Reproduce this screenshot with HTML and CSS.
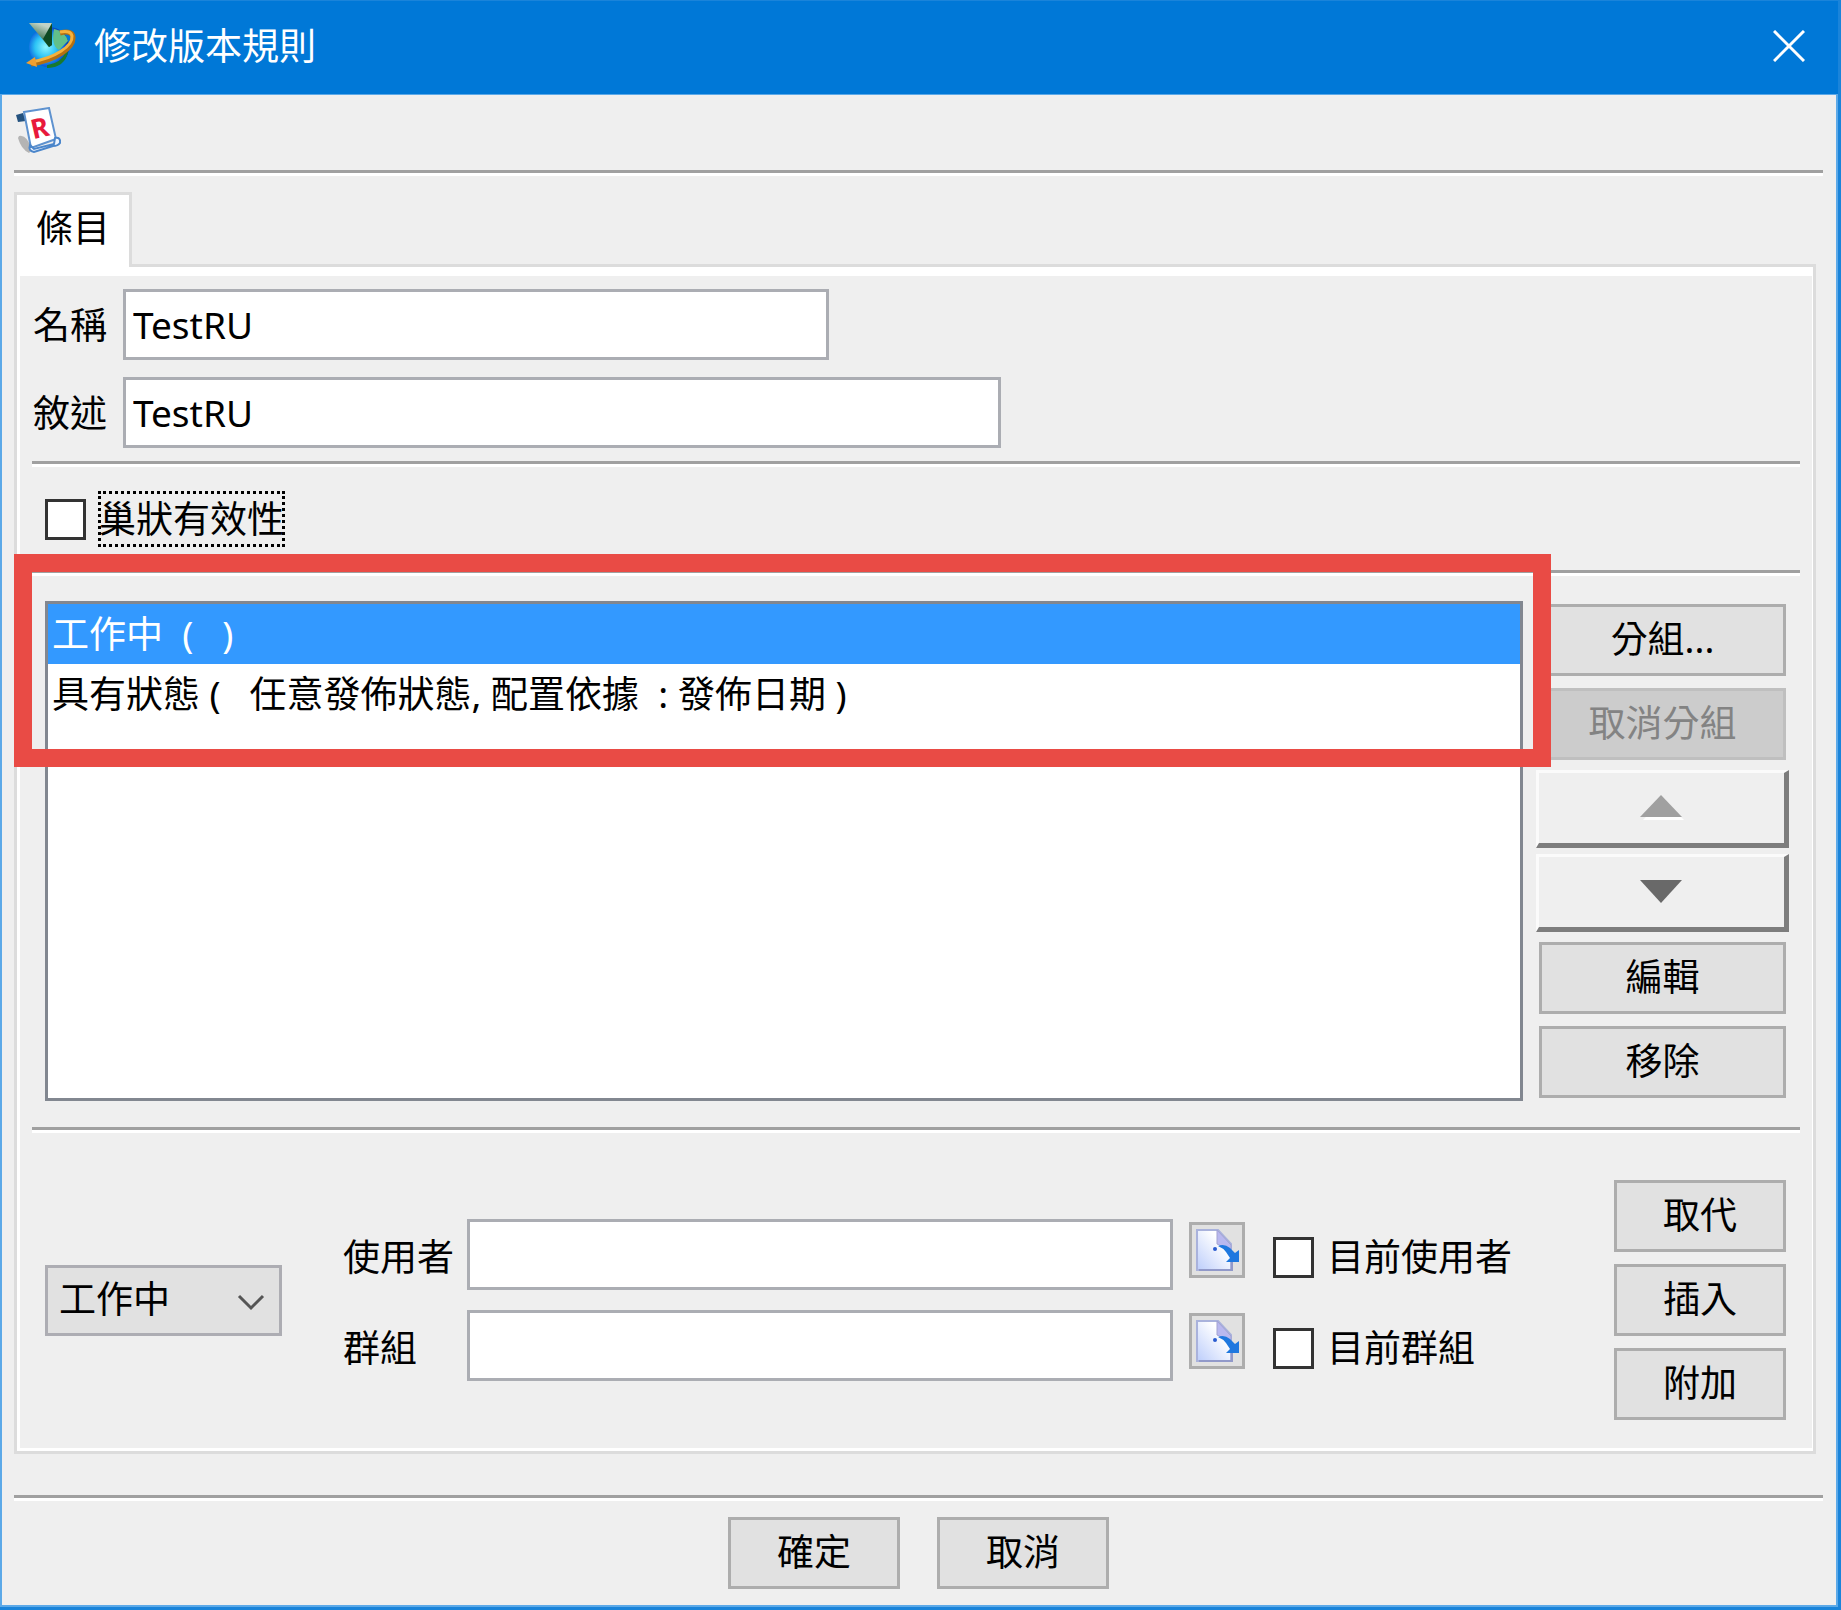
FILE: index.html
```html
<!DOCTYPE html>
<html lang="zh-Hant">
<head>
<meta charset="utf-8">
<meta name="viewport" content="width=device-width, initial-scale=1">
<title>修改版本規則</title>
<link rel="stylesheet" href="styles.css">
</head>
<body>
<svg class="defs" aria-hidden="true">
  <defs>
    <linearGradient id="page-fill" x1="1" y1="0" x2="0" y2="1">
      <stop offset="0.3" stop-color="#ffffff"/>
      <stop offset="1" stop-color="#bccdfb"/>
    </linearGradient>
    <radialGradient id="globe-fill" cx="0.42" cy="0.5" r="0.6">
      <stop offset="0" stop-color="#8ff6ff"/>
      <stop offset="0.45" stop-color="#2cc3f5"/>
      <stop offset="0.8" stop-color="#0a58dc"/>
      <stop offset="1" stop-color="#06308e"/>
    </radialGradient>
    <linearGradient id="arrow-fill" x1="0" y1="1" x2="0.4" y2="0">
      <stop offset="0" stop-color="#14562c"/>
      <stop offset="0.5" stop-color="#4d8060"/>
      <stop offset="1" stop-color="#c2d3c6"/>
    </linearGradient>
    <symbol id="picker" viewBox="0 0 50 50">
      <path d="M5 5h21l13 14v26H5z" fill="url(#page-fill)" stroke="#a9b2dc" stroke-width="2"/>
      <path d="M7 45h33V34" fill="none" stroke="#9199c9" stroke-width="2"/>
      <path d="M25 5l14 15v5L25 19z" fill="#b9b8ef" stroke="#a3a3d2"/>
      <circle cx="23" cy="24" r="2" fill="#2a5cd0"/>
      <path d="M26 21q6-3 12 2l5 5 4-3v12H34l4-4-4-6q-3-4-8-6z" fill="#1f78df"/>
    </symbol>
  </defs>
</svg>
<div class="window">
  <header class="titlebar">
    <svg class="app-icon" viewBox="0 0 50 50" aria-hidden="true">
      <circle cx="23" cy="26" r="20" fill="url(#globe-fill)"/>
      <path d="M28 8q11 2 14 12l-9 9q-8-4-5-21z" fill="#62c08a"/>
      <path d="M22 45q14-2 19-14-3 14-19 15z" fill="#17792f" stroke="#17792f" stroke-width="2"/>
      <path d="M34 12q12-3 13 4c1 11-17 23-42 27" fill="none" stroke="#b46f12" stroke-width="5"/>
      <path d="M34 11q11-2 12 4c1 10-17 22-41 26" fill="none" stroke="#f5b13c" stroke-width="3"/>
      <path d="M0 42l9-6 2 10z" fill="#f0a030"/>
      <path d="M3 2h23v22l-3 2z" fill="url(#arrow-fill)"/>
      <path d="M26 2v22l-3 2-6-8z" fill="#0d4a23"/>
    </svg>
    <h1 class="title">修改版本規則</h1>
    <button class="close" type="button" aria-label="關閉">
      <svg viewBox="0 0 32 32" aria-hidden="true"><path d="M1 1l30 30M31 1L1 31" fill="none" stroke="#fff" stroke-width="3"/></svg>
    </button>
  </header>

  <main class="content">
    <div class="toolbar">
      <button class="tool" type="button" aria-label="版本規則">
        <svg viewBox="0 0 48 48" aria-hidden="true">
          <path d="M5 29q8-2 13 14l-3 3Q7 42 4 31z" fill="#b4b4b4"/>
          <path d="M2 8l7-2 3 8-8 1z" fill="#24527f"/>
          <path d="M10 5l25-4 7 31-25 9z" fill="#fff" stroke="#5e92cf" stroke-width="2"/>
          <path d="M16 38l4 4 20-5 1-6q6-1 5 5-2 3-7 3l-19 6q-6-1-4-7z" fill="#eef5ff" stroke="#4b86cb" stroke-width="2"/>
          <text class="tool-letter" x="17" y="31" transform="rotate(-13 24 22)">R</text>
        </svg>
      </button>
    </div>
    <hr class="rule">

    <div class="tabs" role="tablist">
      <button class="tab" type="button" role="tab" aria-selected="true">條目</button>
    </div>
    <section class="panel" role="tabpanel">
      <div class="sheet">
        <div class="fields">
          <label for="name">名稱</label>
          <input class="box name" id="name" type="text" value="TestRU">
          <label for="desc">敘述</label>
          <input class="box desc" id="desc" type="text" value="TestRU">
        </div>
        <hr class="rule">
        <div class="option">
          <input class="check" id="nested" type="checkbox">
          <label class="focused" for="nested">巢狀有效性</label>
        </div>
        <hr class="rule">

        <div class="entries">
          <ul class="list" role="listbox" aria-label="條目">
            <li class="entry selected" role="option" aria-selected="true">工作中  (   )</li>
            <li class="entry" role="option" aria-selected="false">具有狀態 (   任意發佈狀態, 配置依據  : 發佈日期 )</li>
          </ul>
          <div class="actions">
            <button class="btn" type="button">分組...</button>
            <button class="btn" type="button" disabled>取消分組</button>
            <button class="move" type="button" aria-label="上移">
              <svg viewBox="0 0 44 26" aria-hidden="true"><path d="M3 25h41L23 4z" fill="#fff"/><path d="M0 22h42L21 0z" fill="#a0a0a0"/></svg>
            </button>
            <button class="move" type="button" aria-label="下移">
              <svg viewBox="0 0 44 26" aria-hidden="true"><path d="M0 1h42L21 24z" fill="#696969"/></svg>
            </button>
            <button class="btn" type="button">編輯</button>
            <button class="btn" type="button">移除</button>
          </div>
          <div class="highlight"></div>
        </div>
        <hr class="rule">

        <div class="criteria">
          <div class="drop">
            <select class="select" aria-label="條目類型"><option>工作中</option></select>
            <svg class="chevron" viewBox="0 0 28 18" aria-hidden="true"><path d="M2 3l12 12L26 3" fill="none" stroke="#555" stroke-width="3"/></svg>
          </div>
          <div class="lookup">
            <label for="user">使用者</label>
            <input class="box" id="user" type="text">
            <button class="picker" type="button" aria-label="選擇使用者"><svg aria-hidden="true"><use href="#picker"/></svg></button>
            <input class="check" id="current-user" type="checkbox">
            <label for="current-user">目前使用者</label>
            <label for="group">群組</label>
            <input class="box" id="group" type="text">
            <button class="picker" type="button" aria-label="選擇群組"><svg aria-hidden="true"><use href="#picker"/></svg></button>
            <input class="check" id="current-group" type="checkbox">
            <label for="current-group">目前群組</label>
          </div>
          <div class="apply">
            <button class="btn" type="button">取代</button>
            <button class="btn" type="button">插入</button>
            <button class="btn" type="button">附加</button>
          </div>
        </div>
      </div>
    </section>

    <hr class="rule">
    <footer class="footer">
      <button class="btn" type="button">確定</button>
      <button class="btn" type="button">取消</button>
    </footer>
  </main>
</div>
</body>
</html>
```
FILE: styles.css
```css
* {
  box-sizing: border-box;
}

body {
  margin: 0;
  background: #efefef;
  color: #000;
}

body,
button,
input,
select {
  font-family: "Noto Sans", "Noto Sans CJK TC", sans-serif;
  font-size: 37px;
  line-height: 54px;
}

button,
input,
select {
  margin: 0;
  padding: 0;
  border-radius: 0;
  color: inherit;
}

label {
  white-space: nowrap;
}

svg {
  display: block;
}

.defs {
  position: absolute;
  width: 0;
  height: 0;
}

/* Window frame */
.window {
  display: flex;
  flex-direction: column;
  min-height: 100vh;
  border: solid #1a84da;
  border-width: 0 3px 3px 0;
}

.titlebar {
  display: flex;
  align-items: center;
  height: 94px;
  padding: 0 33px 4px 26px;
  background: #0078d7;
  border-top: 1px solid #1a84da;
}

.app-icon {
  width: 50px;
  height: 50px;
}

.title {
  margin: 0 0 0 18px;
  color: #fff;
  font-size: 37px;
  font-weight: 400;
}

.close {
  margin-left: auto;
  border: 0;
  background: none;
}

.close svg {
  width: 32px;
  height: 32px;
}

.content {
  display: flex;
  flex: 1;
  flex-direction: column;
  padding: 0 13px 16px 12px;
  background: #efefef;
  border: 2px solid #5ca9e8;
  border-top-width: 1px;
}

.toolbar {
  height: 75px;
  padding-top: 12px;
}

.tool {
  border: 0;
  background: none;
}

.tool svg {
  width: 48px;
  height: 48px;
}

.tool-letter {
  font: 700 27px "Noto Sans", sans-serif;
  fill: #e8193c;
}

.rule {
  width: 100%;
  margin: 0;
  border: solid #a0a0a0;
  border-width: 3px 0;
  border-bottom-color: #fff;
}

/* Tab and its panel */
.tabs {
  display: flex;
  margin-top: 16px;
}

.tab {
  z-index: 1;
  height: 75px;
  margin-bottom: -3px;
  padding: 0 19px 6px;
  border: 3px solid #dcdcdc;
  border-bottom: 0;
  background: #fff;
}

.panel {
  display: flex;
  flex: 1;
  margin: 0 7px 41px 0;
  border: 3px solid #dcdcdc;
}

.sheet {
  display: flex;
  flex: 1;
  flex-direction: column;
  min-width: 0;
  padding: 13px 12px 28px;
  border: solid #fff;
  border-width: 9px 1px 3px 3px;
}

.fields {
  display: grid;
  grid-template-columns: 90px minmax(0, 1fr);
  row-gap: 17px;
  align-items: center;
  margin: 0 0 13px 1px;
}

.box {
  width: 100%;
  height: 71px;
  padding: 0 7px;
  border: 3px solid #abadb3;
  background: #fff;
}

.name {
  max-width: 706px;
}

.desc {
  max-width: 878px;
}

.option {
  display: flex;
  gap: 13px;
  align-items: center;
  margin: 25px 13px 24px;
}

.check {
  width: 41px;
  height: 41px;
  flex: none;
  border: 3px solid #333;
  background: #fff;
  appearance: none;
}

.focused {
  outline: 3px dotted #000;
  outline-offset: -2px;
}

/* Rule entries */
.entries {
  position: relative;
  display: flex;
  flex: 1;
  gap: 16px;
  min-height: 498px;
  margin: 25px 14px 26px 13px;
}

.list {
  flex: 1;
  margin: 0;
  padding: 0;
  border: 3px solid #828790;
  background: #fff;
  list-style: none;
}

.entry {
  height: 60px;
  padding: 0 4px;
  line-height: 60px;
  white-space: pre;
}

.selected {
  background: #3399ff;
  color: #fff;
}

.actions {
  display: flex;
  flex-direction: column;
  justify-content: space-between;
  width: 247px;
  margin: 3px 0;
}

.btn {
  height: 72px;
  padding-bottom: 2px;
  border: 3px solid #adadad;
  background: #e1e1e1;
}

.btn:disabled {
  border-color: #bfbfbf;
  background: #cccccc;
  color: #838383;
}

.move {
  display: grid;
  place-items: center;
  height: 78px;
  margin: -3px;
  border: solid;
  border-color: #fbfbfb #7d7d7d #7d7d7d #fbfbfb;
  border-width: 3px 5px 5px 3px;
  background: #efefef;
}

.move svg {
  width: 44px;
  height: 26px;
}

.highlight {
  position: absolute;
  top: -47px;
  right: 235px;
  left: -31px;
  height: 213px;
  border: 18px solid #e94b45;
  pointer-events: none;
}

/* Entry criteria */
.criteria {
  display: flex;
  align-items: center;
  margin: 47px 14px 0 13px;
}

.drop {
  position: relative;
  width: 237px;
  margin-right: 61px;
}

.select {
  width: 100%;
  height: 71px;
  padding: 0 48px 2px 11px;
  border: 3px solid #adadb3;
  background: #e1e1e1;
  appearance: none;
}

.chevron {
  position: absolute;
  top: 28px;
  right: 17px;
  width: 28px;
  height: 18px;
  pointer-events: none;
}

.lookup {
  display: grid;
  flex: 1;
  grid-template-columns: 124px minmax(0, 706px) 100px 54px auto;
  row-gap: 20px;
  align-items: center;
  justify-content: start;
}

.lookup label,
.lookup .check {
  margin-top: 5px;
}

.picker {
  align-self: start;
  width: 56px;
  height: 56px;
  margin: 3px 0 0 16px;
  border: 3px solid #adadad;
  background: #e1e1e1;
}

.picker svg {
  width: 50px;
  height: 50px;
}

.apply {
  display: flex;
  flex-direction: column;
  gap: 12px;
  width: 172px;
}

.footer {
  display: flex;
  gap: 37px;
  justify-content: center;
  padding-top: 16px;
}

.footer .btn {
  width: 172px;
}
```
